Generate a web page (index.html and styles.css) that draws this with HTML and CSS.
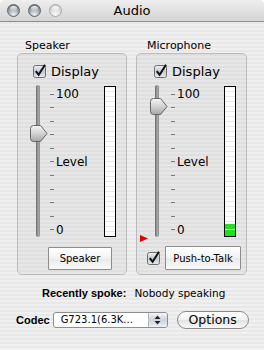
FILE: index.html
```html
<!DOCTYPE html>
<html lang="en">
<head>
    <meta charset="UTF-8">
    <title>Audio</title>
    <link rel="stylesheet" href="styles.css">
</head>
<body>
    <div class="window">
        <div class="titlebar">
            <div class="lights">
                <span class="light"></span>
                <span class="light"></span>
                <span class="light off"></span>
            </div>
            <div class="title">Audio</div>
            <div></div>
        </div>

        <div class="panes">
            <!-- Speaker -->
            <div class="pane">
                <div class="pane-title">Speaker</div>
                <div class="box">
                    <div class="check-row">
                        <svg class="checkbox" width="14" height="14" viewBox="0 0 14 14">
                            <defs><linearGradient id="cb1" x1="0" y1="0" x2="0" y2="1"><stop offset="0" stop-color="#eef1f5"/><stop offset="0.5" stop-color="#c2cad5"/><stop offset="1" stop-color="#e8ecf1"/></linearGradient></defs>
                            <rect x="0.5" y="1.5" width="12" height="12" rx="2" fill="url(#cb1)" stroke="#6c6c6c"/>
                            <path d="M2.8 7.2 L5.6 10.8 L12 0.8" fill="none" stroke="#111" stroke-width="2.1"/>
                        </svg>
                        <span>Display</span>
                    </div>
                    <div class="level">
                        <div class="slider">
                            <div class="track"></div>
                            <svg class="thumb thumb-speaker" width="18" height="17" viewBox="0 0 18 17">
                                <defs><linearGradient id="th1" x1="0" y1="0" x2="0" y2="1"><stop offset="0" stop-color="#f6f6f6"/><stop offset="0.5" stop-color="#d2d2d2"/><stop offset="1" stop-color="#a6a6a6"/></linearGradient></defs>
                                <path d="M3.5 0.5 H10.5 L17 8.5 L10.5 16.5 H3.5 Q0.5 16.5 0.5 13.5 V3.5 Q0.5 0.5 3.5 0.5 Z" fill="url(#th1)" stroke="#666"/>
                            </svg>
                        </div>
                        <div class="scale">
                            <div class="mark"><i></i><span>100</span></div>
                            <div class="mark"><i></i></div>
                            <div class="mark"><i></i></div>
                            <div class="mark"><i></i></div>
                            <div class="mark"><i></i></div>
                            <div class="mark"><i></i><span>Level</span></div>
                            <div class="mark"><i></i></div>
                            <div class="mark"><i></i></div>
                            <div class="mark"><i></i></div>
                            <div class="mark"><i></i></div>
                            <div class="mark"><i></i><span>0</span></div>
                        </div>
                        <div class="meter"></div>
                    </div>
                    <div class="controls">
                        <button class="btn btn-speaker">Speaker</button>
                    </div>
                </div>
            </div>

            <!-- Microphone -->
            <div class="pane pane-mic">
                <div class="pane-title">Microphone</div>
                <div class="box">
                    <div class="check-row">
                        <svg class="checkbox" width="14" height="14" viewBox="0 0 14 14">
                            <defs><linearGradient id="cb2" x1="0" y1="0" x2="0" y2="1"><stop offset="0" stop-color="#eef1f5"/><stop offset="0.5" stop-color="#c2cad5"/><stop offset="1" stop-color="#e8ecf1"/></linearGradient></defs>
                            <rect x="0.5" y="1.5" width="12" height="12" rx="2" fill="url(#cb2)" stroke="#6c6c6c"/>
                            <path d="M2.8 7.2 L5.6 10.8 L12 0.8" fill="none" stroke="#111" stroke-width="2.1"/>
                        </svg>
                        <span>Display</span>
                    </div>
                    <div class="level">
                        <div class="slider">
                            <div class="track"></div>
                            <svg class="thumb thumb-mic" width="18" height="17" viewBox="0 0 18 17">
                                <defs><linearGradient id="th2" x1="0" y1="0" x2="0" y2="1"><stop offset="0" stop-color="#f6f6f6"/><stop offset="0.5" stop-color="#d2d2d2"/><stop offset="1" stop-color="#a6a6a6"/></linearGradient></defs>
                                <path d="M3.5 0.5 H10.5 L17 8.5 L10.5 16.5 H3.5 Q0.5 16.5 0.5 13.5 V3.5 Q0.5 0.5 3.5 0.5 Z" fill="url(#th2)" stroke="#666"/>
                            </svg>
                        </div>
                        <div class="scale">
                            <div class="mark"><i></i><span>100</span></div>
                            <div class="mark"><i></i></div>
                            <div class="mark"><i></i></div>
                            <div class="mark"><i></i></div>
                            <div class="mark"><i></i></div>
                            <div class="mark"><i></i><span>Level</span></div>
                            <div class="mark"><i></i></div>
                            <div class="mark"><i></i></div>
                            <div class="mark"><i></i></div>
                            <div class="mark"><i></i></div>
                            <div class="mark"><i></i><span>0</span></div>
                        </div>
                        <div class="meter">
                            <div class="seg"></div>
                            <div class="seg"></div>
                        </div>
                        <!-- threshold marker -->
                        <svg class="threshold" width="8" height="7" viewBox="0 0 8 7"><path d="M0 0 L8 3.5 L0 7 Z" fill="#e60000"/></svg>
                    </div>
                    <div class="controls">
                        <svg class="checkbox checkbox-ptt" width="14" height="14" viewBox="0 0 14 14">
                            <defs><linearGradient id="cb3" x1="0" y1="0" x2="0" y2="1"><stop offset="0" stop-color="#eef1f5"/><stop offset="0.5" stop-color="#c2cad5"/><stop offset="1" stop-color="#e8ecf1"/></linearGradient></defs>
                            <rect x="0.5" y="1.5" width="12" height="12" rx="2" fill="url(#cb3)" stroke="#6c6c6c"/>
                            <path d="M2.8 7.2 L5.6 10.8 L12 0.8" fill="none" stroke="#111" stroke-width="2.1"/>
                        </svg>
                        <button class="btn btn-ptt">Push-to-Talk</button>
                    </div>
                </div>
            </div>
        </div>

        <div class="status">
            <b>Recently spoke:</b>
            <span>Nobody speaking</span>
        </div>

        <div class="codec">
            <b>Codec</b>
            <div class="popup">
                <span class="popup-text">G723.1(6.3K...</span>
                <span class="popup-arrows">
                    <svg width="7" height="10" viewBox="0 0 7 10"><path d="M3.5 0.5 L6.5 4 H0.5 Z M3.5 9.5 L6.5 6 H0.5 Z" fill="#222"/></svg>
                </span>
            </div>
            <button class="options">Options</button>
        </div>
    </div>
</body>
</html>
```

FILE: styles.css
```css
* {
    box-sizing: border-box;
}

body {
    margin: 0;
    background-color: #fff;
    font-family: "DejaVu Sans", sans-serif;
    color: #000;
}

.window {
    width: 264px;
    height: 350px;
    border-radius: 5px 5px 0 0;
    overflow: hidden;
    background: repeating-linear-gradient(#f0f0f0 0 2px, #e8e8e8 2px 4px);
}

/* title bar */
.titlebar {
    height: 22px;
    display: grid;
    grid-template-columns: 1fr auto 1fr;
    align-items: center;
    border-bottom: 1px solid #8e8e8e;
    background: linear-gradient(#eeeeee, #d4d4d4);
}

.lights {
    display: flex;
    gap: 8px;
    padding-left: 7px;
}

.light {
    width: 13px;
    height: 13px;
    border-radius: 50%;
    border: 1px solid #5d636b;
    background: radial-gradient(circle at 50% 85%, #f0f3f6 0, #a7aeb6 45%, #6a717a 90%);
    position: relative;
}

.light::after {
    content: "";
    position: absolute;
    left: 2px;
    right: 2px;
    top: 1px;
    height: 5px;
    border-radius: 50%;
    background: linear-gradient(rgba(255,255,255,0.9), rgba(255,255,255,0.1));
}

.light.off {
    border-color: #a9a9a9;
    background: radial-gradient(circle at 50% 85%, #fbfbfb 0, #dadada 50%, #c6c6c6 90%);
}

.title {
    font-size: 13px;
    line-height: 16px;
}

/* panes */
.panes {
    display: flex;
    gap: 9px;
    padding: 17px 0 0 17px;
}

.pane-title {
    font-size: 11px;
    line-height: 14px;
    padding-left: 8px;
}

.pane-mic .pane-title {
    padding-left: 11px;
}

.box {
    width: 110px;
    height: 222px;
    padding: 9px 0 4px;
    border: 1px solid #bababa;
    border-radius: 5px;
    background-color: rgba(0,0,0,0.035);
}

.pane-mic .box {
    width: 111px;
}

.check-row {
    display: flex;
    align-items: center;
    height: 15px;
    padding-left: 15px;
    gap: 4px;
    font-size: 13px;
}

.pane-mic .check-row {
    padding-left: 17px;
}

.check-row span {
    line-height: 15px;
    margin-top: 2px;
}

.checkbox {
    flex: none;
    display: block;
}

/* slider + scale + meter */
.level {
    display: flex;
    height: 152px;
    margin-top: 7px;
    padding-left: 12px;
    position: relative;
}

.slider {
    width: 18px;
    position: relative;
}

.track {
    margin-left: 6px;
    width: 4px;
    height: 100%;
    border-radius: 2px;
    background: linear-gradient(to right, #6a6a6a, #a8a8a8 60%, #8c8c8c);
}

.thumb {
    position: absolute;
    left: 0;
}

.thumb-speaker {
    top: 40px;
}

.thumb-mic {
    top: 13px;
    left: 1px;
}

.scale {
    width: 54px;
    margin-left: 2px;
    height: 136px;
    margin-top: 9px;
    display: flex;
    flex-direction: column;
    justify-content: space-between;
}

.pane-mic .scale {
    margin-left: 4px;
    width: 53px;
}

.mark {
    height: 0;
    display: flex;
    align-items: center;
}

.mark i {
    width: 4px;
    height: 1px;
    background-color: #7a7a7a;
}

.mark span {
    margin-left: 2px;
    font-size: 12px;
    line-height: 14px;
}

.meter {
    width: 12px;
    height: 151px;
    margin-top: 1px;
    border: 1px solid #000;
    background: repeating-linear-gradient(to top, #fff 0 4px, #e9e9e9 4px 5px);
    display: flex;
    flex-direction: column-reverse;
    gap: 1px;
}

.seg {
    height: 6px;
    background-color: #1ee01e;
}

.seg + .seg {
    height: 5px;
}

.threshold {
    position: absolute;
    left: 3px;
    top: 150px;
}

/* buttons under the meters */
.controls {
    display: flex;
    align-items: center;
    height: 24px;
    margin-top: 9px;
}

.btn {
    font-family: "DejaVu Sans", sans-serif;
    font-size: 10px;
    color: #000;
    padding: 0;
    border: 1px solid #8c8c8c;
    border-radius: 1px;
    background: linear-gradient(#ffffff, #f2f2f2 50%, #e9e9e9 51%, #fafafa);
}

.btn-speaker {
    margin-left: 30px;
    width: 64px;
    height: 23px;
}

.checkbox-ptt {
    margin-left: 10px;
}

.btn-ptt {
    margin-left: 4px;
    width: 76px;
    height: 24px;
}

/* bottom rows */
.status {
    display: flex;
    gap: 8px;
    margin-top: 11px;
    padding-left: 42px;
    font-size: 11px;
    line-height: 14px;
}

.status b, .codec b {
    font-family: "Liberation Sans", sans-serif;
    font-size: 11px;
}

.status span {
    font-size: 10.5px;
}

.codec {
    display: flex;
    align-items: center;
    height: 19px;
    margin-top: 10px;
    padding-left: 16px;
}

.popup {
    display: flex;
    align-items: stretch;
    width: 115px;
    height: 16px;
    margin-left: 3px;
    border: 1px solid #8d8d8d;
    border-radius: 3px;
    background-color: #fff;
    overflow: hidden;
}

.popup-text {
    flex: 1;
    padding-left: 7px;
    font-size: 10px;
    line-height: 14px;
}

.popup-arrows {
    width: 19px;
    display: flex;
    align-items: center;
    justify-content: center;
    border-left: 1px solid #b5b5b5;
    background: linear-gradient(#f4f6f9, #ccd3dc 50%, #eef1f5);
}

.popup-arrows svg {
    display: block;
}

.options {
    margin-left: 9px;
    width: 72px;
    height: 18px;
    padding: 0;
    font-family: "DejaVu Sans", sans-serif;
    font-size: 12.5px;
    color: #000;
    border: 1px solid #8a8a8a;
    border-radius: 9px;
    background: linear-gradient(#ffffff, #f0f0f0 50%, #e2e2e2 51%, #f8f8f8);
}
```
